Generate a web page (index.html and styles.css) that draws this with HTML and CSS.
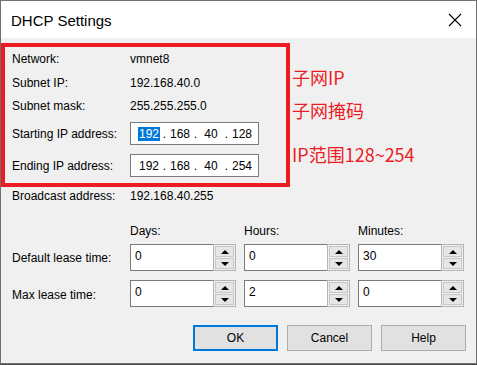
FILE: index.html
```html
<!DOCTYPE html>
<html lang="en">

<head>
    <meta charset="UTF-8">
    <meta name="viewport" content="width=device-width, initial-scale=1.0">
    <title>DHCP Settings</title>
    <link rel="stylesheet" href="styles.css">
</head>

<body>

    <div class="window">
        <div class="titlebar">
            <span class="title">DHCP Settings</span>
            <svg class="close" width="14" height="14" viewBox="0 0 14 14">
                <path d="M1 1 L13 13 M13 1 L1 13" stroke="#000" stroke-width="1.1" fill="none" />
            </svg>
        </div>

        <div class="content">
            <div class="top">
                <div class="mark">
                    <div class="row r1"><span class="label">Network:</span><span>vmnet8</span></div>
                    <div class="row r2"><span class="label">Subnet IP:</span><span>192.168.40.0</span></div>
                    <div class="row r3"><span class="label">Subnet mask:</span><span>255.255.255.0</span></div>
                    <div class="row r4">
                        <span class="label">Starting IP address:</span>
                        <div class="ip">
                            <span class="oct"><span class="sel">192</span></span><span class="dot">.</span>
                            <span class="oct">168</span><span class="dot">.</span>
                            <span class="oct">40</span><span class="dot">.</span>
                            <span class="oct">128</span>
                        </div>
                    </div>
                    <div class="row r5">
                        <span class="label">Ending IP address:</span>
                        <div class="ip">
                            <span class="oct">192</span><span class="dot">.</span>
                            <span class="oct">168</span><span class="dot">.</span>
                            <span class="oct">40</span><span class="dot">.</span>
                            <span class="oct">254</span>
                        </div>
                    </div>
                </div>

                <div class="notes">
                    <p class="note n1">子网IP</p>
                    <p class="note n2">子网掩码</p>
                    <p class="note n3">IP范围128~254</p>
                </div>
            </div>

            <div class="row broadcast"><span class="label">Broadcast address:</span><span>192.168.40.255</span></div>

            <div class="lease lease-head">
                <span></span>
                <span>Days:</span>
                <span>Hours:</span>
                <span>Minutes:</span>
            </div>

            <div class="lease lease-row first">
                <span class="label">Default lease time:</span>
                <div class="spin"><div class="spin-text">0</div><div class="spinner"><span class="up"></span><span class="down"></span></div></div>
                <div class="spin"><div class="spin-text">0</div><div class="spinner"><span class="up"></span><span class="down"></span></div></div>
                <div class="spin"><div class="spin-text">30</div><div class="spinner"><span class="up"></span><span class="down"></span></div></div>
            </div>

            <div class="lease lease-row second">
                <span class="label">Max lease time:</span>
                <div class="spin"><div class="spin-text">0</div><div class="spinner"><span class="up"></span><span class="down"></span></div></div>
                <div class="spin"><div class="spin-text">2</div><div class="spinner"><span class="up"></span><span class="down"></span></div></div>
                <div class="spin"><div class="spin-text">0</div><div class="spinner"><span class="up"></span><span class="down"></span></div></div>
            </div>

            <div class="buttons">
                <button class="btn default">OK</button>
                <button class="btn">Cancel</button>
                <button class="btn">Help</button>
            </div>
        </div>
    </div>

</body>

</html>
```

FILE: styles.css
```css
/* Page */
body {
    margin: 0;
    background: #4a4a4a;
    font-family: 'Liberation Sans', Arial, sans-serif;
    font-size: 12px;
    color: #000;
}

.window {
    width: 477px;
    height: 364px;
    box-sizing: border-box;
    border: 1px solid #707070;
    background: #f0f0f0;
    overflow: hidden;
}

/* Title bar */
.titlebar {
    height: 37px;
    background: #fff;
    display: flex;
    align-items: center;
    justify-content: space-between;
    padding: 0 14px 0 10px;
}

.title {
    font-size: 15px;
    margin-top: 1px;
}

.close {
    display: block;
}

/* Rows */
.row {
    display: flex;
    align-items: center;
}

.label {
    width: 118px;
    flex-shrink: 0;
}

/* Red annotation frame */
.top {
    display: flex;
    align-items: flex-start;
    margin-top: 5px;
}

.mark {
    width: 274px;
    height: 136px;
    border: 4px solid #ed1c24;
    padding-left: 7px;
}

.r1 { height: 24px; }
.r2 { height: 24px; }
.r3 { height: 22px; }
.r4 { height: 33px; }
.r5 { height: 31px; }

/* IP address control */
.ip {
    width: 129px;
    height: 23px;
    border: 1px solid #7a7a7a;
    background: #fff;
    display: flex;
    align-items: center;
    padding-left: 6px;
    box-sizing: border-box;
}

.oct {
    width: 24px;
    text-align: center;
    line-height: 14px;
}

.dot {
    width: 7px;
    text-align: center;
}

.sel {
    background: #0078d7;
    color: #fff;
    padding: 0 1px;
    display: inline-block;
    line-height: 14px;
}

/* Notes */
.notes {
    margin-left: 2px;
    padding-top: 22px;
    color: #ed1c24;
    font-family: 'Noto Sans CJK SC', sans-serif;
    font-size: 18px;
}

.note {
    margin: 0;
    line-height: 24px;
    white-space: nowrap;
}

.n2 { margin-top: 9px; }
.n3 { margin-top: 20px; }

/* Broadcast */
.broadcast {
    height: 18px;
    padding-left: 11px;
}

/* Lease time grid */
.lease {
    display: grid;
    grid-template-columns: 110px 106px 106px 106px;
    column-gap: 8px;
    padding-left: 11px;
    align-items: center;
}

.lease .label {
    width: auto;
}

.lease-head {
    margin-top: 17px;
    height: 18px;
}

.lease-row {
    height: 27px;
}

.lease-row.first { margin-top: 4px; }
.lease-row.second { margin-top: 9px; }

.second .label {
    margin-top: 3px;
}

.spin {
    display: flex;
    height: 27px;
}

.spin-text {
    flex: 1;
    background: #fff;
    border: 1px solid #7a7a7a;
    border-right: none;
    padding: 3px 0 0 4px;
    line-height: 16px;
}

.spinner {
    width: 19px;
    border: 1px solid #b4b4b4;
    background: #f0f0f0;
    display: flex;
    flex-direction: column;
    padding: 1px;
    gap: 1px;
}

.spinner span {
    flex: 1;
    background: #e6e6e6;
    border: 1px solid #c8c8c8;
    display: flex;
    align-items: center;
    justify-content: center;
}

.spinner .up::after {
    content: "";
    border-left: 4px solid transparent;
    border-right: 4px solid transparent;
    border-bottom: 4px solid #000;
}

.spinner .down::after {
    content: "";
    border-left: 4px solid transparent;
    border-right: 4px solid transparent;
    border-top: 4px solid #000;
}

/* Buttons */
.buttons {
    display: flex;
    justify-content: flex-end;
    gap: 9px;
    margin-top: 18px;
    padding-right: 10px;
}

.btn {
    width: 85px;
    height: 26px;
    background: #e1e1e1;
    border: 1px solid #adadad;
    font-family: 'Liberation Sans', Arial, sans-serif;
    font-size: 12px;
    color: #000;
    padding: 0;
}

.btn.default {
    border: 2px solid #0078d7;
}
```
